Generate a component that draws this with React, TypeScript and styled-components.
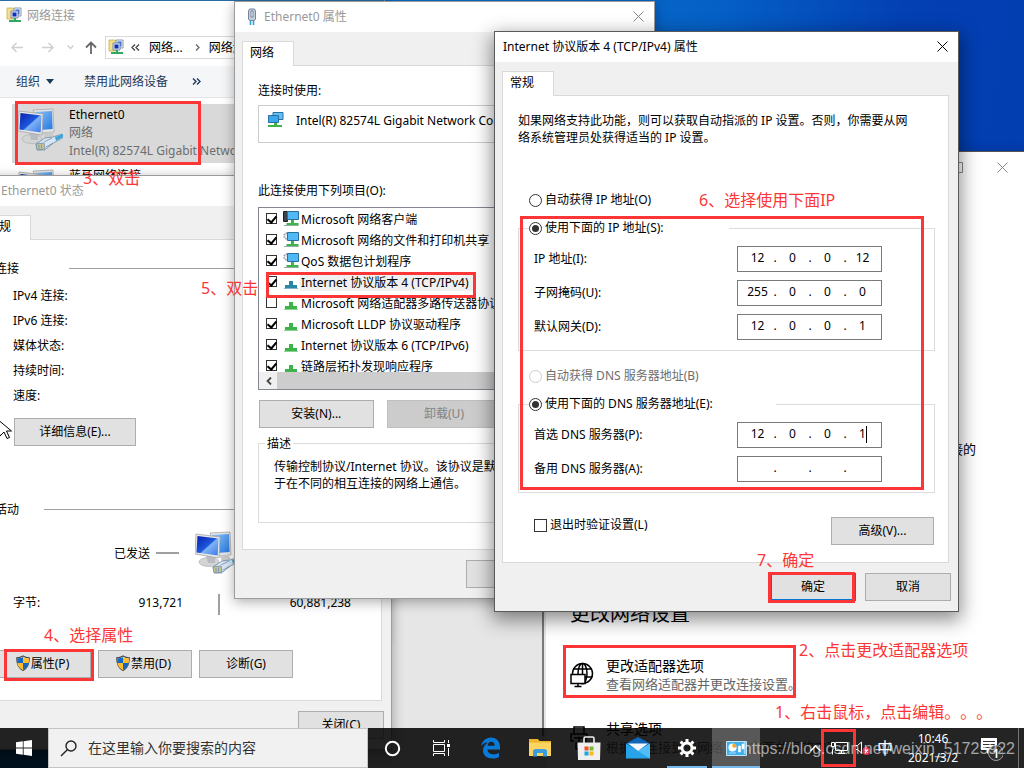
import React from 'react';
import styled, { createGlobalStyle, css } from 'styled-components';

const RED = '#fc3636';

const GlobalStyle = createGlobalStyle`
  * { box-sizing: border-box; }
  body {
    margin: 0;
    font: 12px/17px "Noto Sans", "Noto Sans CJK SC", sans-serif;
    text-spacing-trim: space-all;
    color: #000;
  }
  button, input { font: inherit; color: inherit; margin: 0; }
  p, h1, h2, ul, dl, dd { margin: 0; padding: 0; font: inherit; }
`;

const Desktop = styled.main`
  position: relative;
  min-height: 100vh;
  overflow: hidden;
  background: linear-gradient(100deg, #0078d0 0%, #0a6cc8 45%, #0560c6 62%, #0340b4 78%, #033cae 100%);
`;

/* ---------- windows ---------- */

const Window = styled.section<{ $x: number; $y: number; $w: number; $active?: boolean }>`
  position: absolute;
  left: ${p => p.$x}px;
  top: ${p => p.$y}px;
  width: ${p => p.$w}px;
  display: flex;
  flex-direction: column;
  white-space: nowrap;
  background: #f0f0f0;
  border: 1px solid ${p => (p.$active ? '#5a5a5a' : '#9c9c9c')};
  box-shadow: ${p => (p.$active ? '0 6px 18px 2px rgba(0,0,0,.45)' : '0 3px 12px rgba(0,0,0,.32)')};
`;

const TitleBar = styled.header<{ $active?: boolean }>`
  display: flex;
  align-items: center;
  gap: 3px;
  height: 30px;
  padding: 0 8px 2px;
  background: #fff;
  color: ${p => (p.$active ? '#000' : '#999')};
`;

const TitleIcon = styled.span`
  display: flex;
  justify-content: center;
  width: 18px;
`;

const CloseButton = styled.button`
  display: flex;
  margin-left: auto;
  padding: 2px;
  border: 0;
  background: none;
`;

const TabStrip = styled.div`
  display: flex;
  padding: 9px 9px 0 7px;
`;

const Tab = styled.button`
  position: relative;
  height: 25px;
  width: 52px;
  margin-bottom: -1px;
  padding: 0 0 4px 7px;
  text-align: left;
  background: #fff;
  border: 1px solid #d9d9d9;
  border-bottom: 0;
`;

const Pane = styled.div<{ $pad: string }>`
  display: flex;
  flex-direction: column;
  margin: 0 9px 0 7px;
  padding: ${p => p.$pad};
  background: #fff;
  border: 1px solid #d9d9d9;
`;

const Footer = styled.footer`
  display: flex;
  justify-content: flex-end;
  gap: 9px;
  padding: 10px 7px;
`;

const PushButton = styled.button<{ $w: number; $default?: boolean; $shield?: boolean }>`
  display: flex;
  align-items: center;
  justify-content: center;
  width: ${p => p.$w}px;
  height: 28px;
  padding: ${p => (p.$shield ? '0 4px 1px 0' : '0 0 1px')};
  background: #e1e1e1;
  border: 1px solid #adadad;
  ${p => p.$default && css`border: 2px solid #0078d7;`}
  &:disabled {
    background: #ccc;
    border-color: #bfbfbf;
    color: #838383;
  }
`;

const Check = styled.input.attrs({ type: 'checkbox' })<{ $size: number }>`
  appearance: none;
  position: relative;
  flex: none;
  width: ${p => p.$size}px;
  height: ${p => p.$size}px;
  background: #fff;
  border: 1px solid #333;
  &:checked::after {
    content: '';
    position: absolute;
    left: 2px;
    top: 0;
    width: 4px;
    height: 7px;
    border: solid #000;
    border-width: 0 2px 2px 0;
    transform: rotate(40deg);
  }
`;

const Radio = styled.input.attrs({ type: 'radio' })`
  appearance: none;
  display: grid;
  place-items: center;
  flex: none;
  width: 13px;
  height: 13px;
  background: #fff;
  border: 1px solid #333;
  border-radius: 50%;
  &:checked::after {
    content: '';
    width: 7px;
    height: 7px;
    border-radius: 50%;
    background: #333;
  }
  &:disabled { border-color: #ccc; }
`;

const Choice = styled.label<{ $muted?: boolean }>`
  display: flex;
  align-items: flex-start;
  gap: 3px;
  height: 17px;
  line-height: 15px;
  color: ${p => (p.$muted ? '#6d6d6d' : 'inherit')};
  input { margin-top: 2px; }
`;

/* ---------- network connections folder ---------- */

const Explorer = styled(Window)`
  background: #fff;
  border-top: 2px solid #2a6ba3;
  min-height: 640px;
  ${TitleBar} {
    gap: 4px;
    padding-left: 6px;
  }
`;

const AddressRow = styled.nav`
  display: flex;
  align-items: center;
  height: 35px;
  padding: 0 0 2px 3px;
`;

const NavButton = styled.button<{ $w: number }>`
  display: flex;
  justify-content: center;
  width: ${p => p.$w}px;
  padding: 0;
  border: 0;
  background: none;
`;

const AddressBox = styled.div`
  display: flex;
  align-items: center;
  flex: 1;
  gap: 6px;
  height: 23px;
  padding: 0 2px 1px;
  border: 1px solid #d9d9d9;
`;

const Crumb = styled.span`
  margin: 0 6px 0 3px;
`;

const CommandBar = styled.div`
  display: flex;
  align-items: center;
  gap: 24px;
  height: 32px;
  padding-left: 16px;
  background: #f5f6f7;
  border-bottom: 1px solid #e2e4e8;
  color: #1e395b;
`;

const CommandButton = styled.button<{ $menu?: boolean }>`
  display: flex;
  align-items: center;
  gap: 6px;
  padding: ${p => (p.$menu ? '0 6px 0 0' : '0')};
  border: 0;
  background: none;
`;

const FolderBody = styled.div`
  display: flex;
  flex-direction: column;
  gap: 2px;
  padding: 6px 0 0 12px;
`;

const Connection = styled.article<{ $selected?: boolean }>`
  display: flex;
  gap: 3px;
  height: 59px;
  padding: 2px 0 0 6px;
  background: ${p => (p.$selected ? '#d9d9d9' : 'transparent')};
`;

const ConnectionText = styled.div`
  line-height: 18px;
  color: #6d6d6d;
`;

const ConnectionName = styled.h2`
  color: #000;
`;

/* ---------- settings ---------- */

const SettingsWindow = styled(Window)`
  flex-direction: row;
  height: 630px;
  background: #fff;
  border-color: #555;
`;

const SettingsNav = styled.nav`
  width: 246px;
  background: #e6e6e6;
  border-right: 2px solid #e6e6e6;
  padding-bottom: 44px;
`;

const NavScroll = styled.div`
  height: 100%;
  border-right: 2px solid #7a7a7a;
`;

const SettingsPage = styled.div`
  flex: 1;
  display: flex;
  flex-direction: column;
`;

const SettingsControls = styled.div`
  display: flex;
  justify-content: flex-end;
  gap: 34px;
  padding: 10px 17px 0 0;
`;

const SettingsNote = styled.p`
  align-self: flex-end;
  margin: 266px 49px 0 0;
  font-size: 13px;
  line-height: 20px;
`;

const SettingsHeading = styled.h1`
  margin: 140px 0 0 24px;
  font-size: 20px;
  line-height: 30px;
`;

const SettingsOption = styled.a`
  display: flex;
  align-items: center;
  gap: 12px;
  margin: 0 0 26px 24px;
  color: #000;
  text-decoration: none;
  &:first-of-type { margin-top: 27px; }
`;

const OptionTitle = styled.div`
  font-size: 14px;
  line-height: 20px;
`;

const OptionHint = styled.div`
  font-size: 13px;
  line-height: 17px;
  color: #666;
`;

/* ---------- status dialog ---------- */

const GroupLine = styled.h2<{ $label: number; $top: number }>`
  display: flex;
  align-items: center;
  margin-top: ${p => p.$top}px;
  &::after {
    content: '';
    flex: 1;
    height: 1px;
    background: #a0a0a0;
  }
  span { width: ${p => p.$label}px; }
`;

const StatusRows = styled.dl`
  margin: 6px 0 10px;
  padding-left: 18px;
  line-height: 25px;
`;

const Indent = styled.div<{ $x: number }>`
  padding-left: ${p => p.$x}px;
`;

const Activity = styled.div`
  display: flex;
  align-items: center;
  gap: 6px;
  height: 44px;
  margin: 13px 0 19px;
  padding-left: 119px;
`;

const Dash = styled.i`
  width: 23px;
  height: 2px;
  margin-right: 10px;
  background: #a0a0a0;
`;

const Bytes = styled.div`
  display: grid;
  grid-template-columns: 60px 110px 35px 2px 131px;
  height: 21px;
  line-height: 17px;
  margin-bottom: 35px;
  padding-left: 18px;
`;

const Count = styled.output`
  text-align: right;
`;

const CountBar = styled.i`
  grid-column: 4;
  background: #a0a0a0;
`;

const ButtonRow = styled.div<{ $gap: number; $x: number }>`
  display: flex;
  gap: ${p => p.$gap}px;
  padding-left: ${p => p.$x}px;
`;

/* ---------- adapter properties dialog ---------- */

const AdapterBox = styled.div`
  display: flex;
  gap: 12px;
  height: 38px;
  margin: 6px 0 39px;
  padding: 5px 8px;
  border: 1px solid #ccc;
  line-height: 19px;
`;

const ListBox = styled.div`
  height: 183px;
  margin: 8px 0 10px;
  border: 1px solid #828790;
`;

const ListItems = styled.ul`
  height: 164px;
  overflow: hidden;
  list-style: none;
`;

const ListRow = styled.label<{ $selected?: boolean }>`
  display: flex;
  align-items: center;
  height: 21px;
  padding-left: 7px;
  svg { margin: 0 1px 0 6px; flex: none; }
  span { padding: 2px 6px 0 1px; background: ${p => (p.$selected ? '#f0f0f0' : 'transparent')}; }
`;

const HScroll = styled.div`
  display: flex;
  height: 17px;
  padding-left: 2px;
  background: #f0f0f0;
`;

const ScrollArrow = styled.button`
  display: grid;
  place-items: center;
  width: 16px;
  padding: 0;
  border: 0;
  background: none;
`;

const ScrollThumb = styled.div`
  flex: 1;
  margin-right: 40px;
  background: #cdcdcd;
`;

const Description = styled.fieldset`
  min-width: 0;
  margin: 7px 0 0;
  padding: 6px 0 30px 15px;
  border: 1px solid #dcdcdc;
  legend { margin-left: -9px; padding: 0 2px; }
`;

/* ---------- TCP/IPv4 dialog ---------- */

const AddressGroup = styled.fieldset<{ $legend: number }>`
  display: flex;
  flex-direction: column;
  gap: 8px;
  min-width: 0;
  margin: 11px 0 0;
  padding: 9px 52px 10px 15px;
  border: 1px solid #dcdcdc;
  legend {
    width: ${p => p.$legend}px;
    margin-left: -5px;
    padding: 0;
  }
`;

const AddressLine = styled.div`
  display: flex;
  align-items: center;
  justify-content: space-between;
  height: 26px;
  label { padding-bottom: 2px; }
`;

const OctetBox = styled.div`
  position: relative;
  display: flex;
  align-items: center;
  width: 145px;
  height: 26px;
  padding: 0 0 3px 4px;
  border: 1px solid #7a7a7a;
`;

const Octet = styled.input`
  width: 31px;
  padding: 0;
  border: 0;
  background: none;
  text-align: center;
  outline: 0;
`;

const Dot = styled.span`
  width: 4px;
  text-align: center;
`;

const Caret = styled.i`
  position: absolute;
  right: 14px;
  top: 3px;
  width: 1px;
  height: 17px;
  background: #000;
`;

const Spaced = styled.div<{ $top: number }>`
  margin-top: ${p => p.$top}px;
  padding-left: 11px;
`;

const BottomLine = styled.div`
  display: flex;
  align-items: flex-start;
  justify-content: space-between;
  margin-top: 24px;
  padding: 0 1px 0 16px;
`;

/* ---------- taskbar ---------- */

const Taskbar = styled.footer`
  position: absolute;
  left: 0;
  right: 0;
  bottom: 0;
  display: flex;
  height: 40px;
  background: rgba(0, 0, 0, .86);
  color: #fff;
`;

const TaskButton = styled.button<{ $w: number; $open?: boolean; $current?: boolean }>`
  display: grid;
  place-items: center;
  flex: none;
  width: ${p => p.$w}px;
  padding: 0;
  border: 0;
  background: ${p => (p.$current ? 'rgba(255,255,255,.24)' : 'none')};
  ${p => p.$open && css`
    padding-top: 2px;
    border-bottom: 2px solid #76b9ed;
    margin-left: 5px;
  `}
`;

const SearchBox = styled.label`
  display: flex;
  align-items: center;
  gap: 11px;
  flex: 0 1 320px;
  min-width: 60px;
  padding-left: 11px;
  background: #f1f1f1;
  border: 1px solid #c4c4c4;
  input {
    flex: 1;
    min-width: 0;
    border: 0;
    padding: 0;
    background: none;
    font-size: 14px;
    line-height: 20px;
  }
  input::placeholder { color: #333; opacity: 1; }
`;

const Tray = styled.div`
  display: flex;
  align-items: stretch;
  margin-left: auto;
`;

const Clock = styled.time`
  display: flex;
  flex-direction: column;
  justify-content: center;
  width: 72px;
  text-align: center;
  line-height: 19px;
`;

const Ime = styled.span`
  font-size: 16px;
  line-height: 20px;
`;

const ShowDesktop = styled.button`
  width: 6px;
  margin-left: 7px;
  padding: 0;
  border: 0;
  border-left: 1px solid #777;
  background: none;
`;

/* ---------- annotations drawn over the desktop ---------- */

const Mark = styled.div<{ $x: number; $y: number; $w: number; $h: number }>`
  position: absolute;
  left: ${p => p.$x}px;
  top: ${p => p.$y}px;
  width: ${p => p.$w}px;
  height: ${p => p.$h}px;
  border: 3px solid ${RED};
  pointer-events: none;
`;

const Note = styled.p<{ $x: number; $y: number }>`
  position: absolute;
  left: ${p => p.$x}px;
  top: ${p => p.$y}px;
  font-size: 16px;
  line-height: 24px;
  white-space: nowrap;
  color: ${RED};
`;

const Watermark = styled.p`
  position: absolute;
  right: 9px;
  bottom: 7px;
  font: 16px/24px "Liberation Sans", Arial, sans-serif;
  color: rgba(255, 255, 255, .6);
`;

const Pointer = styled.svg`
  position: absolute;
  left: 0;
  top: 418px;
`;

/* ---------- icons ---------- */

const Cross = ({ color = '#000' }: { color?: string }) => (
  <svg width="11" height="11" viewBox="0 0 11 11" stroke={color} fill="none">
    <path d="M.5.5l10 10M10.500.5l-10 10" />
  </svg>
);

const BigNetwork = () => (
  <svg width="48" height="48" viewBox="0 0 48 48">
    <defs>
      <linearGradient id="screenA" x1="0" y1="0" x2="1" y2="1">
        <stop offset="0" stopColor="#0a1fae" />
        <stop offset=".5" stopColor="#1c58dc" />
        <stop offset=".55" stopColor="#7fb2f4" />
        <stop offset="1" stopColor="#3a7ae8" />
      </linearGradient>
      <linearGradient id="screenB" x1="0" y1="0" x2="1" y2="1">
        <stop offset="0" stopColor="#8cc4fa" />
        <stop offset="1" stopColor="#2678de" />
      </linearGradient>
    </defs>
    <path d="M15 4l20-1 1 23-13 1z" fill="#e4e4e4" stroke="#a9a9a9" strokeWidth=".8" />
    <path d="M17 6l17-1 .6 18L22 24z" fill="url(#screenB)" />
    <path d="M25 27l8-1 3 4-9 3z" fill="#c9c9c9" />
    <ellipse cx="14" cy="33" rx="10" ry="4.500" fill="#d2d4d6" stroke="#aaa" strokeWidth=".6" />
    <path d="M11 26l9 2v6h-7z" fill="#b9bcc0" />
    <path d="M1 5l24 3-1 21L0 25z" fill="#e9e9e9" stroke="#a4a4a4" strokeWidth=".8" />
    <path d="M2.500 7l21 2.600-.8 17L1.500 23.500z" fill="url(#screenA)" />
    <path d="M18 38l9-6 8-1 9-3 .5 4-9 5-9 7-7 0z" fill="#d8e6f2" stroke="#6f8eaa" strokeWidth=".8" />
    <path d="M37 31l8-3v3l-7 4z" fill="#38a7dc" />
    <path d="M18 38l8-1 1 6-8 1z" fill="#c6c49a" stroke="#6f8eaa" strokeWidth=".8" />
    <path d="M21 39v4M23.500 38.500v4M26 36l8-4M28 41l7-4" stroke="#6f8eaa" strokeWidth=".8" fill="none" />
  </svg>
);

const FolderNetwork = () => (
  <svg width="17" height="17" viewBox="0 0 17 17">
    <path d="M1 1h6l1 1v10H1z" fill="#f4e08a" stroke="#c9b04c" strokeWidth=".8" />
    <path d="M8 1h7v8H8z" fill="#eef3fa" stroke="#8b98b0" />
    <path d="M9.500 2.500h4v5h-4z" fill="#2d6be0" />
    <path d="M5 4h7v7H5z" fill="#dfe6f2" stroke="#7d8aa6" />
    <path d="M6.500 5.500h4v4h-4z" fill="#0d2fc4" />
    <path d="M8 11h2v2h5v2H3v-2h5z" fill="#2fa860" />
  </svg>
);

const PlugIcon = () => (
  <svg width="10" height="17" viewBox="0 0 10 17">
    <path d="M2.500 1h5l1 2v8l-1 1.500h-5L1.500 11V3z" fill="#c3cedb" stroke="#74859c" />
    <path d="M4 3h2v6H4z" fill="#f7f9fb" stroke="#5f7189" strokeWidth=".8" />
    <path d="M3.500 13v4M6.500 13v4" stroke="#28a4d8" strokeWidth="1.600" />
  </svg>
);

const AdapterIcon = () => (
  <svg width="17" height="17" viewBox="0 0 17 17">
    <path d="M6 1.500h10v7H6z" fill="#5fc1f7" stroke="#2a6f9f" />
    <path d="M1.500 4.500h10v7h-10z" fill="#3ba9f0" stroke="#2a6f9f" />
    <path d="M7 12h3v2h5v2H1v-2h6z" fill="#3cb44a" />
  </svg>
);

const ClientIcon = ({ gear }: { gear?: boolean }) => (
  <svg width="16" height="17" viewBox="0 0 16 17">
    {gear ? (
      <circle cx="4" cy="5" r="3" fill="#e8ecf0" stroke="#8a98a8" strokeWidth="1.500" strokeDasharray="1.500 1" />
    ) : (
      <path d="M.5 1.500h4v10h-4z" fill="#3b444d" stroke="#222" />
    )}
    <path d="M4.500 1.500h11v8h-11z" fill="#4fb8f5" stroke="#2a6f9f" />
    <path d="M8 10h3v3h4.500v3h-12v-3H8z" fill="#3cb44a" />
    <path d="M1 15.500h14" stroke="#9aa" />
  </svg>
);

const ProtocolIcon = ({ color }: { color: string }) => (
  <svg width="16" height="17" viewBox="0 0 16 17">
    <path d="M6 8h4v4h4v3H2v-3h4z" fill={color} />
    <path d="M1 15.500h14" stroke={color} strokeOpacity=".6" />
  </svg>
);

const Shield = () => (
  <svg width="16" height="17" viewBox="0 0 16 17">
    <path d="M8 1c2 1.300 4 1.800 6.300 1.800 0 6-1 10-6.300 12.700C2.700 12.800 1.700 8.800 1.700 2.800 4 2.800 6 2.300 8 1z" fill="#fff" stroke="#4a4a4a" strokeWidth="1.200" />
    <path d="M8 2v6H2.400C2.200 6.500 2.200 5 2.300 3.500 4.500 3.400 6.200 3 8 2zM8 8h5.600c-.5 3-2 5.200-5.600 7z" fill="#1268c4" />
    <path d="M8 2v6h5.600c.2-1.500.2-3 .1-4.500C11.500 3.400 9.800 3 8 2zM8 8H2.400c.5 3 2 5.200 5.600 7z" fill="#fcbc2c" />
  </svg>
);

const GlobeScreen = () => (
  <svg width="24" height="26" viewBox="0 0 24 26" fill="none" stroke="#000" strokeWidth="1.500">
    <circle cx="12.500" cy="11.500" r="10" />
    <ellipse cx="12.500" cy="11.500" rx="4.500" ry="10" />
    <path d="M3.500 7h18M2.500 15h20M12.500 1v20" />
    <path d="M1 12.500h14v9H1zM8 21.500V24.500M4.500 24.500h7" fill="#fff" />
  </svg>
);

const Printer = () => (
  <svg width="24" height="26" viewBox="0 0 24 26" fill="none" stroke="#000" strokeWidth="1.500">
    <path d="M4 9V2h10v7M4 16H1V9h16v4M4 13h6" />
    <path d="M9 18v-5h7v5M6 24v-6h13v6z" />
  </svg>
);

/* ---------- data ---------- */

type Item = { label: string; checked: boolean; kind: 'client' | 'service' | 'protocol'; selected?: boolean };

const items: Item[] = [
  { label: 'Microsoft 网络客户端', checked: true, kind: 'client' },
  { label: 'Microsoft 网络的文件和打印机共享', checked: true, kind: 'service' },
  { label: 'QoS 数据包计划程序', checked: true, kind: 'service' },
  { label: 'Internet 协议版本 4 (TCP/IPv4)', checked: true, kind: 'protocol', selected: true },
  { label: 'Microsoft 网络适配器多路传送器协议', checked: false, kind: 'protocol' },
  { label: 'Microsoft LLDP 协议驱动程序', checked: true, kind: 'protocol' },
  { label: 'Internet 协议版本 6 (TCP/IPv6)', checked: true, kind: 'protocol' },
  { label: '链路层拓扑发现响应程序', checked: true, kind: 'protocol' },
];

const statusLabels = ['IPv4 连接:', 'IPv6 连接:', '媒体状态:', '持续时间:', '速度:'];

/* ---------- parts ---------- */

function ItemIcon({ item }: { item: Item }) {
  if (item.kind === 'protocol') return <ProtocolIcon color={item.selected ? '#2787a5' : '#3cb44a'} />;
  return <ClientIcon gear={item.kind === 'service'} />;
}

function AddressField({ id, label, octets, caret }: { id: string; label: string; octets: string[]; caret?: boolean }) {
  return (
    <AddressLine>
      <label htmlFor={id}>{label}</label>
      <OctetBox>
        {octets.map((value, i) => (
          <React.Fragment key={i}>
            {i > 0 && <Dot>.</Dot>}
            <Octet id={i === 0 ? id : undefined} aria-label={i > 0 ? label : undefined} defaultValue={value} />
          </React.Fragment>
        ))}
        {caret && <Caret />}
      </OctetBox>
    </AddressLine>
  );
}

function ConnectionsFolder() {
  return (
    <Explorer $x={-1} $y={-1} $w={386}>
      <TitleBar>
        <FolderNetwork />
        <span>网络连接</span>
      </TitleBar>
      <AddressRow>
        <NavButton $w={28} aria-label="back">
          <svg width="13" height="11" viewBox="0 0 13 11" fill="none" stroke="#cfcfcf" strokeWidth="1.500"><path d="M12 5.500H1M5.500 1L1 5.500 5.500 10" /></svg>
        </NavButton>
        <NavButton $w={32} aria-label="forward">
          <svg width="13" height="11" viewBox="0 0 13 11" fill="none" stroke="#cfcfcf" strokeWidth="1.500"><path d="M1 5.500h11M7.500 1L12 5.500 7.500 10" /></svg>
        </NavButton>
        <NavButton $w={14} aria-label="history">
          <svg width="7" height="5" viewBox="0 0 7 5" fill="none" stroke="#cfcfcf" strokeWidth="1.500"><path d="M.5.5l3 3 3-3" /></svg>
        </NavButton>
        <NavButton $w={28} aria-label="up">
          <svg width="12" height="13" viewBox="0 0 12 13" fill="none" stroke="#666" strokeWidth="1.800"><path d="M6 13V1.500M1 6.500l5-5 5 5" /></svg>
        </NavButton>
        <AddressBox>
          <FolderNetwork />
          <svg width="9" height="7" viewBox="0 0 9 7" fill="none" stroke="#444" strokeWidth="1.300"><path d="M4 .5l-3 3 3 3M8 .5l-3 3 3 3" /></svg>
          <Crumb>网络...</Crumb>
          <svg width="5" height="7" viewBox="0 0 5 7" fill="none" stroke="#666" strokeWidth="1.300"><path d="M1 .5l3 3-3 3" /></svg>
          <Crumb>网络连接</Crumb>
        </AddressBox>
      </AddressRow>
      <CommandBar>
        <CommandButton $menu>
          组织
          <svg width="8" height="5" viewBox="0 0 8 5"><path d="M0 0h8L4 5z" fill="#1e395b" /></svg>
        </CommandButton>
        <CommandButton>禁用此网络设备</CommandButton>
        <CommandButton aria-label="more">
          <svg width="9" height="7" viewBox="0 0 9 7" fill="none" stroke="#1e395b" strokeWidth="1.400"><path d="M1 .5l3 3-3 3M5 .5l3 3-3 3" /></svg>
        </CommandButton>
      </CommandBar>
      <FolderBody>
        <Connection $selected>
          <BigNetwork />
          <ConnectionText>
            <ConnectionName>Ethernet0</ConnectionName>
            <p>网络</p>
            <p>Intel(R) 82574L Gigabit Network Connection</p>
          </ConnectionText>
        </Connection>
        <Connection>
          <BigNetwork />
          <ConnectionText>
            <ConnectionName>蓝牙网络连接</ConnectionName>
          </ConnectionText>
        </Connection>
      </FolderBody>
    </Explorer>
  );
}

function Settings() {
  return (
    <SettingsWindow $x={299} $y={151} $w={727}>
      <SettingsNav><NavScroll /></SettingsNav>
      <SettingsPage>
        <SettingsControls>
          <svg width="11" height="11" viewBox="0 0 11 11" fill="none" stroke="#888"><path d="M.5.5h10v10H.5z" /></svg>
          <Cross color="#888" />
        </SettingsControls>
        <SettingsNote>连接的</SettingsNote>
        <SettingsHeading>更改网络设置</SettingsHeading>
        <SettingsOption href="#adapter">
          <GlobeScreen />
          <div>
            <OptionTitle>更改适配器选项</OptionTitle>
            <OptionHint>查看网络适配器并更改连接设置。</OptionHint>
          </div>
        </SettingsOption>
        <SettingsOption href="#sharing">
          <Printer />
          <div>
            <OptionTitle>共享选项</OptionTitle>
            <OptionHint>根据所连接到的网络，决定要共享的内容。</OptionHint>
          </div>
        </SettingsOption>
      </SettingsPage>
    </SettingsWindow>
  );
}

function StatusDialog() {
  return (
    <Window $x={-29} $y={175} $w={421}>
      <TitleBar>
        <TitleIcon><PlugIcon /></TitleIcon>
        <span>Ethernet0 状态</span>
      </TitleBar>
      <TabStrip><Tab>常规</Tab></TabStrip>
      <Pane $pad="20px 15px 22px 15px">
        <GroupLine $label={74} $top={0}><span>连接</span></GroupLine>
        <StatusRows>
          {statusLabels.map(label => <dt key={label}>{label}</dt>)}
        </StatusRows>
        <Indent $x={19}><PushButton $w={122}>详细信息(E)...</PushButton></Indent>
        <GroupLine $label={49} $top={55}><span>活动</span></GroupLine>
        <Activity>
          <span>已发送</span>
          <Dash />
          <BigNetwork />
        </Activity>
        <Bytes>
          <span>字节:</span>
          <Count>913,721</Count>
          <CountBar />
          <Count>60,881,238</Count>
        </Bytes>
        <ButtonRow $gap={7} $x={2}>
          <PushButton $w={94} $shield><Shield />属性(P)</PushButton>
          <PushButton $w={94} $shield><Shield />禁用(D)</PushButton>
          <PushButton $w={94}>诊断(G)</PushButton>
        </ButtonRow>
      </Pane>
      <Footer><PushButton $w={86}>关闭(C)</PushButton></Footer>
    </Window>
  );
}

function PropertiesDialog() {
  return (
    <Window $x={234} $y={1} $w={421}>
      <TitleBar>
        <TitleIcon><PlugIcon /></TitleIcon>
        <span>Ethernet0 属性</span>
        <CloseButton aria-label="close"><Cross color="#888" /></CloseButton>
      </TitleBar>
      <TabStrip><Tab>网络</Tab></TabStrip>
      <Pane $pad="16px 15px 26px 15px">
        <p>连接时使用:</p>
        <AdapterBox>
          <AdapterIcon />
          <span>Intel(R) 82574L Gigabit Network Connection</span>
        </AdapterBox>
        <p>此连接使用下列项目(O):</p>
        <ListBox>
          <ListItems>
            {items.map(item => (
              <li key={item.label}>
                <ListRow $selected={item.selected}>
                  <Check $size={11} defaultChecked={item.checked} />
                  <ItemIcon item={item} />
                  <span>{item.label}</span>
                </ListRow>
              </li>
            ))}
          </ListItems>
          <HScroll>
            <ScrollArrow aria-label="scroll left">
              <svg width="6" height="8" viewBox="0 0 6 8" fill="none" stroke="#444" strokeWidth="1.800"><path d="M5 .5L1.500 4 5 7.500" /></svg>
            </ScrollArrow>
            <ScrollThumb />
          </HScroll>
        </ListBox>
        <ButtonRow $gap={13} $x={1}>
          <PushButton $w={115}>安装(N)...</PushButton>
          <PushButton $w={115} disabled>卸载(U)</PushButton>
          <PushButton $w={115}>属性(R)</PushButton>
        </ButtonRow>
        <Description>
          <legend>描述</legend>
          <p>传输控制协议/Internet 协议。该协议是默认的广域网络协议，用<br />于在不同的相互连接的网络上通信。</p>
        </Description>
      </Pane>
      <Footer>
        <PushButton $w={86}>确定</PushButton>
        <PushButton $w={86}>取消</PushButton>
      </Footer>
    </Window>
  );
}

function Ipv4Dialog() {
  return (
    <Window $x={494} $y={31} $w={465} $active>
      <TitleBar $active>
        <span>Internet 协议版本 4 (TCP/IPv4) 属性</span>
        <CloseButton aria-label="close"><Cross /></CloseButton>
      </TitleBar>
      <TabStrip><Tab>常规</Tab></TabStrip>
      <Pane $pad="16px 13px 17px 15px">
        <p>如果网络支持此功能，则可以获取自动指派的 IP 设置。否则，你需要从网<br />络系统管理员处获得适当的 IP 设置。</p>
        <Spaced $top={46}>
          <Choice><Radio name="ip" />自动获得 IP 地址(O)</Choice>
        </Spaced>
        <AddressGroup $legend={200}>
          <legend><Choice><Radio name="ip" defaultChecked />使用下面的 IP 地址(S):</Choice></legend>
          <AddressField id="ip-address" label="IP 地址(I):" octets={['12', '0', '0', '12']} />
          <AddressField id="ip-mask" label="子网掩码(U):" octets={['255', '0', '0', '0']} />
          <AddressField id="ip-gateway" label="默认网关(D):" octets={['12', '0', '0', '1']} />
        </AddressGroup>
        <Spaced $top={17}>
          <Choice $muted><Radio name="dns" disabled />自动获得 DNS 服务器地址(B)</Choice>
        </Spaced>
        <AddressGroup $legend={247}>
          <legend><Choice><Radio name="dns" defaultChecked />使用下面的 DNS 服务器地址(E):</Choice></legend>
          <AddressField id="dns-first" label="首选 DNS 服务器(P):" octets={['12', '0', '0', '1']} caret />
          <AddressField id="dns-second" label="备用 DNS 服务器(A):" octets={['', '', '', '']} />
        </AddressGroup>
        <BottomLine>
          <Choice><Check $size={13} />退出时验证设置(L)</Choice>
          <PushButton $w={103}>高级(V)...</PushButton>
        </BottomLine>
      </Pane>
      <Footer>
        <PushButton $w={86} $default>确定</PushButton>
        <PushButton $w={86}>取消</PushButton>
      </Footer>
    </Window>
  );
}

function SystemTaskbar() {
  return (
    <Taskbar>
      <TaskButton $w={48} aria-label="start">
        <svg width="16" height="16" viewBox="0 0 16 16" fill="#fff"><path d="M0 2.200l6.800-.9v6.300H0zM7.600 1.200L16 0v7.600H7.600zM0 8.400h6.800v6.300L0 13.800zM7.600 8.400H16V16l-8.400-1.200z" /></svg>
      </TaskButton>
      <SearchBox>
        <svg width="17" height="17" viewBox="0 0 17 17" fill="none" stroke="#222" strokeWidth="1.400"><circle cx="11" cy="6" r="5" /><path d="M7.300 9.700L1 16" /></svg>
        <input type="text" placeholder="在这里输入你要搜索的内容" aria-label="搜索" />
      </SearchBox>
      <TaskButton $w={49} aria-label="cortana">
        <svg width="17" height="17" viewBox="0 0 17 17"><circle cx="8.500" cy="8.500" r="6.700" fill="none" stroke="#fff" strokeWidth="2" /></svg>
      </TaskButton>
      <TaskButton $w={49} aria-label="task view">
        <svg width="17" height="16" viewBox="0 0 17 16" fill="none" stroke="#fff"><path d="M.5 0v2.500h11V0M.5 16v-2.500h11V16M.5 4.500h11v7H.5zM15.500 0v3M15.500 8v8" /><path d="M14 4h3v3h-3z" fill="#fff" stroke="none" /></svg>
      </TaskButton>
      <TaskButton $w={49} aria-label="edge">
        <svg width="21" height="22" viewBox="0 0 21 22"><path d="M1 9.500C2 4 6 .5 11 .5c5.500 0 9 4 9 9.500v2.500H7.500c.3 3.500 3 4.800 6 4.800 2 0 3.800-.6 5.500-1.600v4.300c-2 1-4.200 1.500-6.500 1.500C7 21.500 3 18.500 3 13.500c0-3.500 2-6.500 5-8C4.500 5.500 2.500 7 1 9.500zM7.600 8.800h7c0-2.500-1.200-4-3.400-4-2 0-3.200 1.500-3.600 4z" fill="#0a7ad8" /></svg>
      </TaskButton>
      <TaskButton $w={49} aria-label="file explorer">
        <svg width="22" height="18" viewBox="0 0 22 18"><path d="M0 0h9l1.500 2H22v15H0z" fill="#f0b429" /><path d="M0 3.500h22V17H0z" fill="#fcd462" /><path d="M4 17.500V11.500l2-1.500h10l2 1.500v6h-4V14H8v3.500z" fill="#3d9be0" /></svg>
      </TaskButton>
      <TaskButton $w={49} aria-label="store">
        <svg width="24" height="24" viewBox="0 0 24 24"><path d="M7 7V2.500C7 1.500 7.500 1 8.500 1h7c1 0 1.500.5 1.500 1.500V7" fill="none" stroke="#eee" strokeWidth="1.600" /><path d="M.5 6.500h23L23 24H1z" fill="#efefef" /><path d="M7.500 10.500h4v4h-4z" fill="#f04e24" /><path d="M12.500 10.500h4v4h-4z" fill="#7cb82f" /><path d="M7.500 15.500h4v4h-4z" fill="#1ba3e8" /><path d="M12.500 15.500h4v4h-4z" fill="#fbb813" /></svg>
      </TaskButton>
      <TaskButton $w={49} aria-label="mail">
        <svg width="24" height="22" viewBox="0 0 24 22"><path d="M0 6.500L12 0l12 6.500V20H0z" fill="#0e66b8" /><path d="M0 6.500L12 14l12-7.500V21.500H0z" fill="#28a3ea" /><path d="M12 14l12-7.500v15z" fill="#51bdf5" /><path d="M2 6.500h20L12 14z" fill="#f2f8fd" /></svg>
      </TaskButton>
      <TaskButton $w={40} $open aria-label="settings">
        <svg width="18" height="18" viewBox="-9 -9 18 18" fill="none" stroke="#fff"><circle r="5" strokeWidth="2.800" /><path strokeWidth="3" d="M0-9v3M0 9V6M-9 0h3M9 0H6M-6.400-6.400l2.200 2.200M6.400 6.400L4.200 4.200M-6.400 6.400l2.200-2.200M6.400-6.400L4.200-4.200" /></svg>
      </TaskButton>
      <TaskButton $w={48} $open $current aria-label="control panel">
        <svg width="21" height="15" viewBox="0 0 21 15"><path d="M.5.5h20v14H.5z" fill="#3fb0ee" stroke="#bfe6fb" /><circle cx="6.500" cy="6.500" r="4" fill="#fff" /><path d="M6.500 2.500a4 4 0 0 1 4 4h-4z" fill="#f4a52a" /><path d="M12.500 5h2v6h-2zM16 3h2v5h-2zM3 12h7" fill="#fff" stroke="#fff" strokeWidth=".6" /></svg>
      </TaskButton>
      <Tray>
        <TaskButton $w={24} aria-label="hidden icons">
          <svg width="11" height="7" viewBox="0 0 11 7" fill="none" stroke="#fff" strokeWidth="1.300"><path d="M.5 6l5-5 5 5" /></svg>
        </TaskButton>
        <TaskButton $w={24} aria-label="network">
          <svg width="17" height="14" viewBox="0 0 17 14" fill="none" stroke="#fff"><path d="M4.500 1.500h12v8h-12zM10.500 9.500v3M7 12.500h7M1.500 8.500v5M.5 1.500h3v4h-3zM2 5.500v3.500" /></svg>
        </TaskButton>
        <TaskButton $w={22} aria-label="volume">
          <svg width="17" height="16" viewBox="0 0 17 16"><path d="M1 5.500h2.500L7.500 2v11L3.500 9.500H1z" fill="none" stroke="#fff" /><circle cx="12.500" cy="11" r="4" fill="#dd3344" /><path d="M11 9.500l3 3M14 9.500l-3 3" stroke="#fff" strokeWidth="1.300" /></svg>
        </TaskButton>
        <TaskButton $w={24}><Ime>中</Ime></TaskButton>
        <Clock><span>10:46</span><span>2021/3/2</span></Clock>
        <TaskButton $w={42} aria-label="notifications">
          <svg width="26" height="26" viewBox="0 0 26 26">
            <path d="M4 3h16v12h-6l-4 4v-4H4z" fill="#fff" />
            <path d="M6 6.500h12M6 9.500h12M6 12.500h8" stroke="#333" />
            <circle cx="19" cy="18" r="7.500" fill="#333" fillOpacity=".9" stroke="#a0a0a0" />
            <text x="19" y="22.500" textAnchor="middle" fontSize="12" fontWeight="600" fill="#fff">1</text>
          </svg>
        </TaskButton>
        <ShowDesktop aria-label="show desktop" />
      </Tray>
    </Taskbar>
  );
}

export default function App() {
  return (
    <>
      <GlobalStyle />
      <Desktop>
        <Settings />
        <ConnectionsFolder />
        <StatusDialog />
        <PropertiesDialog />
        <Ipv4Dialog />
        <Pointer width="13" height="21" viewBox="0 0 13 21"><path d="M-3.500.5L11.500 13H6.500l3 6.500-2.500 1-3-6.500-4 4z" fill="#fff" stroke="#000" /></Pointer>
        <SystemTaskbar />
        <Mark $x={821} $y={729} $w={35} $h={38} />
        <Mark $x={563} $y={645} $w={233} $h={53} />
        <Mark $x={15} $y={101} $w={186} $h={64} />
        <Mark $x={4} $y={649} $w={90} $h={32} />
        <Mark $x={266} $y={272} $w={210} $h={26} />
        <Mark $x={520} $y={216} $w={404} $h={274} />
        <Mark $x={768} $y={572} $w={87} $h={31} />
        <Note $x={775} $y={700}>1、右击鼠标，点击编辑。。。</Note>
        <Note $x={799} $y={638}>2、点击更改适配器选项</Note>
        <Note $x={83} $y={166}>3、双击</Note>
        <Note $x={44} $y={623}>4、选择属性</Note>
        <Note $x={201} $y={276}>5、双击</Note>
        <Note $x={699} $y={188}>6、选择使用下面IP</Note>
        <Note $x={757} $y={548}>7、确定</Note>
        <Watermark>https://blog.csdn.net/weixin_51725922</Watermark>
      </Desktop>
    </>
  );
}
